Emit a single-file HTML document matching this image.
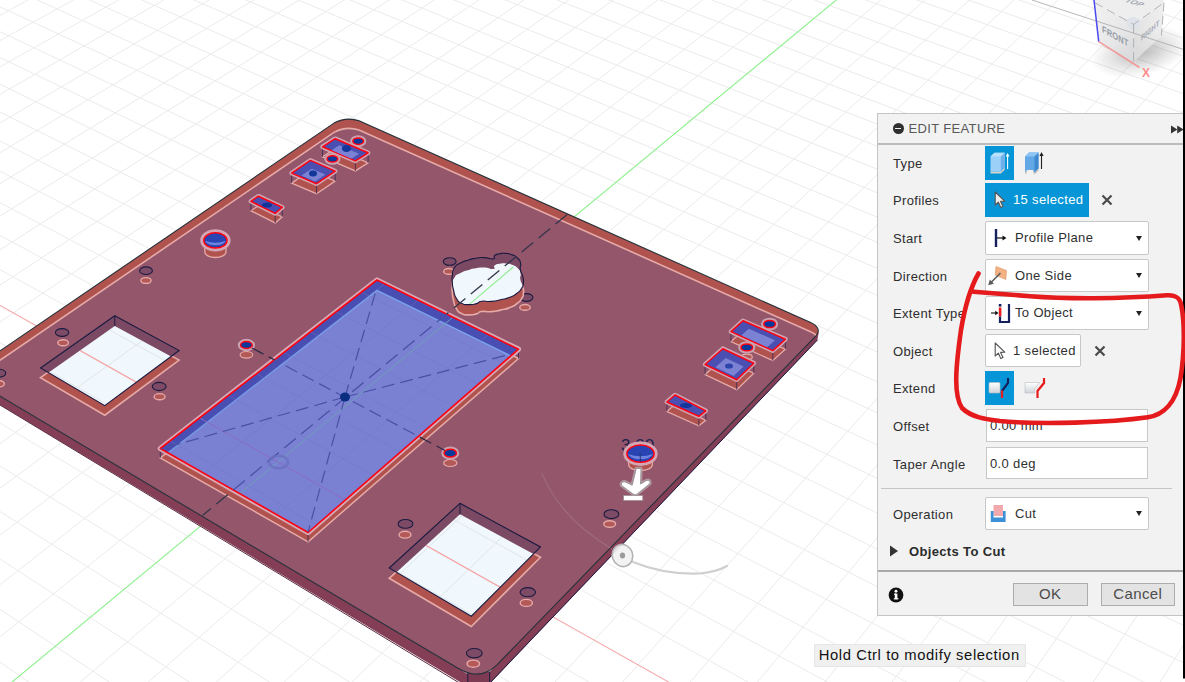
<!DOCTYPE html>
<html><head><meta charset="utf-8"><title>Edit Feature</title>
<style>
html,body{margin:0;padding:0;background:#fff;}
body{width:1185px;height:682px;overflow:hidden;position:relative;font-family:"Liberation Sans",sans-serif;}

#panel{position:absolute;left:877px;top:113px;width:305px;height:500.5px;background:#f2f2f2;border:1px solid #c4c4c4;border-right:none;font-size:13px;color:#303030;letter-spacing:0.35px;}
#panel .hdr{position:absolute;left:0;top:0;width:100%;height:29px;border-bottom:2px solid #bcbcbc;}
#panel .minus{position:absolute;left:14.5px;top:9px;width:11px;height:11px;border-radius:50%;background:#2f2f2f;}
#panel .minus:after{content:"";position:absolute;left:2.5px;top:4.8px;width:6px;height:1.5px;background:#f2f2f2;}
#panel .ttl{position:absolute;left:30.5px;top:7px;font-size:13px;color:#585858;}
#panel .ff{position:absolute;left:292.5px;top:11px;}
#panel .row{position:absolute;left:0;width:100%;height:34px;}
#panel .lbl{position:absolute;left:15px;top:10px;white-space:nowrap;color:#2e2e2e;}
#panel .bbtn{position:absolute;width:29px;height:33.5px;background:#0696d7;}
#panel .ibtn{position:absolute;width:29px;height:33.5px;}
#panel .selbtn{position:absolute;top:0;height:31px;border:1px solid #c8c8c8;background:#fff;border-radius:2px;}
#panel .selbtn.on{background:#0696d7;border-color:#0696d7;color:#fff;border-radius:0;height:32px;}
#panel .selbtn span{position:absolute;left:27px;top:8px;white-space:nowrap;}
#panel .selbtn .cur{position:absolute;left:7px;top:6px;}
#panel .xx{position:absolute;top:11px;}
#panel .dd{position:absolute;top:0;width:162px;height:31.5px;border:1px solid #c8c8c8;background:#fff;border-radius:2px;}
#panel .dd span{position:absolute;left:29px;top:8px;white-space:nowrap;}
#panel .dd .ic{position:absolute;left:1px;top:4px;}
#panel .dd i{position:absolute;right:6.5px;top:13.5px;width:0;height:0;border-left:3.6px solid transparent;border-right:3.6px solid transparent;border-top:5.2px solid #222;}
#panel .inp{position:absolute;top:0;width:160px;height:30.5px;border:1px solid #c8c8c8;background:#fff;}
#panel .inp span{position:absolute;left:3px;top:8px;}
#panel .sep{position:absolute;height:1px;background:#c6c6c6;}
#panel .sep2{position:absolute;left:0;width:100%;height:2px;background:#a9a9a9;}
#panel .info{position:absolute;left:10px;top:472.5px;width:16px;height:16px;}
#panel .btn{position:absolute;top:469px;width:72.5px;height:20.5px;border:1px solid #adadad;background:#e3e3e3;text-align:center;font-size:15px;line-height:20px;color:#4c4c4c;}
#tip{position:absolute;left:813.5px;top:644px;width:212px;height:22.5px;background:#f0f0f0;border:1px solid #e6e6e6;box-sizing:border-box;font-size:14.8px;line-height:21.5px;color:#111;white-space:nowrap;padding-left:4.2px;letter-spacing:0.58px;}
</style></head><body>
<svg width="1185" height="682" viewBox="0 0 1185 682" style="position:absolute;left:0;top:0">
<defs>
<clipPath id="cp"><path d="M -35.5,375.1 L 334,123.1 Q 346,116.6 359,120.7 L 810,322.3 Q 822.5,327.8 816,335.9 L 497,664.8 Q 480,681.5 458,668.3 Z"/></clipPath>
</defs>
<rect width="1185" height="682" fill="#ffffff"/>
<g stroke="#ebebeb" stroke-width="1" fill="none"><line x1="1157.2" y1="687.0" x2="1190.0" y2="634.4"/><line x1="1090.1" y1="687.0" x2="1190.0" y2="535.0"/><line x1="1022.9" y1="687.0" x2="1190.0" y2="445.3"/><line x1="955.6" y1="687.0" x2="1190.0" y2="364.0"/><line x1="888.3" y1="687.0" x2="1190.0" y2="289.9"/><line x1="820.9" y1="687.0" x2="1190.0" y2="222.2"/><line x1="753.4" y1="687.0" x2="1190.0" y2="160.0"/><line x1="685.8" y1="687.0" x2="1190.0" y2="102.6"/><line x1="618.2" y1="687.0" x2="1190.0" y2="49.7"/><line x1="550.5" y1="687.0" x2="1190.0" y2="0.5"/><line x1="482.7" y1="687.0" x2="1151.2" y2="-5.0"/><line x1="414.8" y1="687.0" x2="1107.2" y2="-5.0"/><line x1="346.9" y1="687.0" x2="1063.2" y2="-5.0"/><line x1="278.9" y1="687.0" x2="1019.1" y2="-5.0"/><line x1="210.8" y1="687.0" x2="975.0" y2="-5.0"/><line x1="142.6" y1="687.0" x2="930.8" y2="-5.0"/><line x1="74.4" y1="687.0" x2="886.6" y2="-5.0"/><line x1="-5.0" y1="640.9" x2="798.0" y2="-5.0"/><line x1="-5.0" y1="588.6" x2="753.6" y2="-5.0"/><line x1="-5.0" y1="539.0" x2="709.2" y2="-5.0"/><line x1="-5.0" y1="492.0" x2="664.7" y2="-5.0"/><line x1="-5.0" y1="447.2" x2="620.2" y2="-5.0"/><line x1="-5.0" y1="404.6" x2="575.7" y2="-5.0"/><line x1="-5.0" y1="364.0" x2="531.0" y2="-5.0"/><line x1="-5.0" y1="325.3" x2="486.4" y2="-5.0"/><line x1="-5.0" y1="288.4" x2="441.7" y2="-5.0"/><line x1="-5.0" y1="253.0" x2="396.9" y2="-5.0"/><line x1="-5.0" y1="219.2" x2="352.1" y2="-5.0"/><line x1="-5.0" y1="186.8" x2="307.2" y2="-5.0"/><line x1="-5.0" y1="155.7" x2="262.3" y2="-5.0"/><line x1="-5.0" y1="125.9" x2="217.4" y2="-5.0"/><line x1="-5.0" y1="97.3" x2="172.4" y2="-5.0"/><line x1="-5.0" y1="69.8" x2="127.3" y2="-5.0"/><line x1="-5.0" y1="43.3" x2="82.2" y2="-5.0"/><line x1="-5.0" y1="17.9" x2="37.1" y2="-5.0"/><line x1="36.2" y1="687.0" x2="-5.0" y2="658.8"/><line x1="116.7" y1="687.0" x2="-5.0" y2="605.9"/><line x1="197.1" y1="687.0" x2="-5.0" y2="555.8"/><line x1="277.4" y1="687.0" x2="-5.0" y2="508.3"/><line x1="357.6" y1="687.0" x2="-5.0" y2="463.0"/><line x1="437.7" y1="687.0" x2="-5.0" y2="420.0"/><line x1="517.7" y1="687.0" x2="-5.0" y2="379.0"/><line x1="597.6" y1="687.0" x2="-5.0" y2="339.9"/><line x1="757.1" y1="687.0" x2="-5.0" y2="266.9"/><line x1="836.6" y1="687.0" x2="-5.0" y2="232.7"/><line x1="916.1" y1="687.0" x2="-5.0" y2="200.0"/><line x1="995.5" y1="687.0" x2="-5.0" y2="168.6"/><line x1="1074.8" y1="687.0" x2="-5.0" y2="138.5"/><line x1="1153.9" y1="687.0" x2="-5.0" y2="109.6"/><line x1="1190.0" y1="666.0" x2="-5.0" y2="81.8"/><line x1="1190.0" y1="628.5" x2="-5.0" y2="55.1"/><line x1="1190.0" y1="592.4" x2="-5.0" y2="29.4"/><line x1="1190.0" y1="557.6" x2="-5.0" y2="4.6"/><line x1="1190.0" y1="524.1" x2="26.4" y2="-5.0"/><line x1="1190.0" y1="491.8" x2="78.5" y2="-5.0"/><line x1="1190.0" y1="460.6" x2="130.5" y2="-5.0"/><line x1="1190.0" y1="430.4" x2="182.4" y2="-5.0"/><line x1="1190.0" y1="401.3" x2="234.3" y2="-5.0"/><line x1="1190.0" y1="373.2" x2="286.1" y2="-5.0"/><line x1="1190.0" y1="345.9" x2="337.9" y2="-5.0"/><line x1="1190.0" y1="319.6" x2="389.6" y2="-5.0"/><line x1="1190.0" y1="294.0" x2="441.2" y2="-5.0"/><line x1="1190.0" y1="269.3" x2="492.7" y2="-5.0"/><line x1="1190.0" y1="245.3" x2="544.2" y2="-5.0"/><line x1="1190.0" y1="222.0" x2="595.7" y2="-5.0"/><line x1="1190.0" y1="199.5" x2="647.0" y2="-5.0"/><line x1="1190.0" y1="177.6" x2="698.3" y2="-5.0"/><line x1="1190.0" y1="156.3" x2="749.6" y2="-5.0"/><line x1="1190.0" y1="135.6" x2="800.7" y2="-5.0"/><line x1="1190.0" y1="115.5" x2="851.8" y2="-5.0"/><line x1="1190.0" y1="96.0" x2="902.9" y2="-5.0"/><line x1="1190.0" y1="77.0" x2="953.8" y2="-5.0"/><line x1="1190.0" y1="58.5" x2="1004.8" y2="-5.0"/><line x1="1190.0" y1="40.5" x2="1055.6" y2="-5.0"/><line x1="1190.0" y1="22.9" x2="1106.4" y2="-5.0"/><line x1="1190.0" y1="5.9" x2="1157.1" y2="-5.0"/></g>
<line x1="6.1" y1="687.0" x2="842.3" y2="-5.0" stroke="#8cf08c" stroke-width="1.1"/>
<line x1="677.4" y1="687.0" x2="-5.0" y2="302.6" stroke="#f6a8a8" stroke-width="1.05"/>
<polygon points="-40.0,372.4 468.0,674.2 480.0,681.0 490.0,671.5 816.0,335.9 819.0,331.0 817.4,340.0 480.0,694.0 -40.0,380.8" fill="#843f56"/>
<polygon points="467.8,672.5 489.7,671.6 489.7,700.0 467.8,700.0" fill="#7c3b52"/>
<polyline points="-40.0,380.8 480.0,695.4" fill="none" stroke="#5a2c44" stroke-width="1"/>
<polyline points="817.4,340.0 480.0,693.3" fill="none" stroke="#1b1b42" stroke-width="1"/>
<line x1="467.8" y1="672.5" x2="467.8" y2="690" stroke="#1b1b42"/>
<line x1="489.7" y1="671.6" x2="489.7" y2="690" stroke="#1b1b42"/>
<path d="M -35.5,375.1 L 334,123.1 Q 346,116.6 359,120.7 L 810,322.3 Q 822.5,327.8 816,335.9 L 497,664.8 Q 480,681.5 458,668.3 Z" fill="#b0534f"/>
<g clip-path="url(#cp)"><path d="M -35.5,375.1 L 334,123.1 Q 346,116.6 359,120.7 L 810,322.3 Q 822.5,327.8 816,335.9 L 497,664.8 Q 480,681.5 458,668.3 Z" transform="translate(0,9.3)" fill="#94566a" stroke="#e6aaa8" stroke-width="1.6"/></g>
<path d="M -35.5,375.1 L 334,123.1 Q 346,116.6 359,120.7 L 810,322.3 Q 822.5,327.8 816,335.9 L 497,664.8 Q 480,681.5 458,668.3 Z" fill="none" stroke="#24303a" stroke-width="1.1"/>
<polygon points="114.8,325.3 179.1,360.1 104.8,415.2 40.5,377.6" fill="#b0534f" stroke="#e6aaa8" stroke-width="1.6"/><clipPath id="h1"><polygon points="114.8,315.7 179.1,350.5 104.8,405.6 40.5,368.0"/></clipPath><clipPath id="h1s"><polygon points="114.8,325.9 179.1,360.7 104.8,415.8 40.5,378.2"/></clipPath><polygon points="114.8,315.7 179.1,350.5 104.8,405.6 40.5,368.0" fill="#7b4963"/><g clip-path="url(#h1)"><polygon points="114.8,325.9 179.1,360.7 104.8,415.8 40.5,378.2" fill="#f0f8fd"/><g clip-path="url(#h1s)"><g stroke="#dfe5e8" stroke-width="1" fill="none"><line x1="1157.2" y1="687.0" x2="1190.0" y2="634.4"/><line x1="1090.1" y1="687.0" x2="1190.0" y2="535.0"/><line x1="1022.9" y1="687.0" x2="1190.0" y2="445.3"/><line x1="955.6" y1="687.0" x2="1190.0" y2="364.0"/><line x1="888.3" y1="687.0" x2="1190.0" y2="289.9"/><line x1="820.9" y1="687.0" x2="1190.0" y2="222.2"/><line x1="753.4" y1="687.0" x2="1190.0" y2="160.0"/><line x1="685.8" y1="687.0" x2="1190.0" y2="102.6"/><line x1="618.2" y1="687.0" x2="1190.0" y2="49.7"/><line x1="550.5" y1="687.0" x2="1190.0" y2="0.5"/><line x1="482.7" y1="687.0" x2="1151.2" y2="-5.0"/><line x1="414.8" y1="687.0" x2="1107.2" y2="-5.0"/><line x1="346.9" y1="687.0" x2="1063.2" y2="-5.0"/><line x1="278.9" y1="687.0" x2="1019.1" y2="-5.0"/><line x1="210.8" y1="687.0" x2="975.0" y2="-5.0"/><line x1="142.6" y1="687.0" x2="930.8" y2="-5.0"/><line x1="74.4" y1="687.0" x2="886.6" y2="-5.0"/><line x1="-5.0" y1="640.9" x2="798.0" y2="-5.0"/><line x1="-5.0" y1="588.6" x2="753.6" y2="-5.0"/><line x1="-5.0" y1="539.0" x2="709.2" y2="-5.0"/><line x1="-5.0" y1="492.0" x2="664.7" y2="-5.0"/><line x1="-5.0" y1="447.2" x2="620.2" y2="-5.0"/><line x1="-5.0" y1="404.6" x2="575.7" y2="-5.0"/><line x1="-5.0" y1="364.0" x2="531.0" y2="-5.0"/><line x1="-5.0" y1="325.3" x2="486.4" y2="-5.0"/><line x1="-5.0" y1="288.4" x2="441.7" y2="-5.0"/><line x1="-5.0" y1="253.0" x2="396.9" y2="-5.0"/><line x1="-5.0" y1="219.2" x2="352.1" y2="-5.0"/><line x1="-5.0" y1="186.8" x2="307.2" y2="-5.0"/><line x1="-5.0" y1="155.7" x2="262.3" y2="-5.0"/><line x1="-5.0" y1="125.9" x2="217.4" y2="-5.0"/><line x1="-5.0" y1="97.3" x2="172.4" y2="-5.0"/><line x1="-5.0" y1="69.8" x2="127.3" y2="-5.0"/><line x1="-5.0" y1="43.3" x2="82.2" y2="-5.0"/><line x1="-5.0" y1="17.9" x2="37.1" y2="-5.0"/><line x1="36.2" y1="687.0" x2="-5.0" y2="658.8"/><line x1="116.7" y1="687.0" x2="-5.0" y2="605.9"/><line x1="197.1" y1="687.0" x2="-5.0" y2="555.8"/><line x1="277.4" y1="687.0" x2="-5.0" y2="508.3"/><line x1="357.6" y1="687.0" x2="-5.0" y2="463.0"/><line x1="437.7" y1="687.0" x2="-5.0" y2="420.0"/><line x1="517.7" y1="687.0" x2="-5.0" y2="379.0"/><line x1="597.6" y1="687.0" x2="-5.0" y2="339.9"/><line x1="757.1" y1="687.0" x2="-5.0" y2="266.9"/><line x1="836.6" y1="687.0" x2="-5.0" y2="232.7"/><line x1="916.1" y1="687.0" x2="-5.0" y2="200.0"/><line x1="995.5" y1="687.0" x2="-5.0" y2="168.6"/><line x1="1074.8" y1="687.0" x2="-5.0" y2="138.5"/><line x1="1153.9" y1="687.0" x2="-5.0" y2="109.6"/><line x1="1190.0" y1="666.0" x2="-5.0" y2="81.8"/><line x1="1190.0" y1="628.5" x2="-5.0" y2="55.1"/><line x1="1190.0" y1="592.4" x2="-5.0" y2="29.4"/><line x1="1190.0" y1="557.6" x2="-5.0" y2="4.6"/><line x1="1190.0" y1="524.1" x2="26.4" y2="-5.0"/><line x1="1190.0" y1="491.8" x2="78.5" y2="-5.0"/><line x1="1190.0" y1="460.6" x2="130.5" y2="-5.0"/><line x1="1190.0" y1="430.4" x2="182.4" y2="-5.0"/><line x1="1190.0" y1="401.3" x2="234.3" y2="-5.0"/><line x1="1190.0" y1="373.2" x2="286.1" y2="-5.0"/><line x1="1190.0" y1="345.9" x2="337.9" y2="-5.0"/><line x1="1190.0" y1="319.6" x2="389.6" y2="-5.0"/><line x1="1190.0" y1="294.0" x2="441.2" y2="-5.0"/><line x1="1190.0" y1="269.3" x2="492.7" y2="-5.0"/><line x1="1190.0" y1="245.3" x2="544.2" y2="-5.0"/><line x1="1190.0" y1="222.0" x2="595.7" y2="-5.0"/><line x1="1190.0" y1="199.5" x2="647.0" y2="-5.0"/><line x1="1190.0" y1="177.6" x2="698.3" y2="-5.0"/><line x1="1190.0" y1="156.3" x2="749.6" y2="-5.0"/><line x1="1190.0" y1="135.6" x2="800.7" y2="-5.0"/><line x1="1190.0" y1="115.5" x2="851.8" y2="-5.0"/><line x1="1190.0" y1="96.0" x2="902.9" y2="-5.0"/><line x1="1190.0" y1="77.0" x2="953.8" y2="-5.0"/><line x1="1190.0" y1="58.5" x2="1004.8" y2="-5.0"/><line x1="1190.0" y1="40.5" x2="1055.6" y2="-5.0"/><line x1="1190.0" y1="22.9" x2="1106.4" y2="-5.0"/><line x1="1190.0" y1="5.9" x2="1157.1" y2="-5.0"/></g><line x1="677.4" y1="687.0" x2="-5.0" y2="302.6" stroke="#f5a3a3" stroke-width="1.2"/></g></g>
<polygon points="114.8,315.7 179.1,350.5 104.8,405.6 40.5,368.0" fill="none" stroke="#1b1b42" stroke-width="1.1"/>
<line x1="114.8" y1="315.7" x2="114.8" y2="325.9" stroke="#1b1b42"/>
<polygon points="460.0,513.6 540.5,557.2 471.3,626.5 389.2,578.3" fill="#b0534f" stroke="#e6aaa8" stroke-width="1.6"/><clipPath id="h2"><polygon points="460.0,503.3 540.5,546.9 471.3,616.2 389.2,568.0"/></clipPath><clipPath id="h2s"><polygon points="460.0,514.2 540.5,557.8 471.3,627.1 389.2,578.9"/></clipPath><polygon points="460.0,503.3 540.5,546.9 471.3,616.2 389.2,568.0" fill="#7b4963"/><g clip-path="url(#h2)"><polygon points="460.0,514.2 540.5,557.8 471.3,627.1 389.2,578.9" fill="#f0f8fd"/><g clip-path="url(#h2s)"><g stroke="#dfe5e8" stroke-width="1" fill="none"><line x1="1157.2" y1="687.0" x2="1190.0" y2="634.4"/><line x1="1090.1" y1="687.0" x2="1190.0" y2="535.0"/><line x1="1022.9" y1="687.0" x2="1190.0" y2="445.3"/><line x1="955.6" y1="687.0" x2="1190.0" y2="364.0"/><line x1="888.3" y1="687.0" x2="1190.0" y2="289.9"/><line x1="820.9" y1="687.0" x2="1190.0" y2="222.2"/><line x1="753.4" y1="687.0" x2="1190.0" y2="160.0"/><line x1="685.8" y1="687.0" x2="1190.0" y2="102.6"/><line x1="618.2" y1="687.0" x2="1190.0" y2="49.7"/><line x1="550.5" y1="687.0" x2="1190.0" y2="0.5"/><line x1="482.7" y1="687.0" x2="1151.2" y2="-5.0"/><line x1="414.8" y1="687.0" x2="1107.2" y2="-5.0"/><line x1="346.9" y1="687.0" x2="1063.2" y2="-5.0"/><line x1="278.9" y1="687.0" x2="1019.1" y2="-5.0"/><line x1="210.8" y1="687.0" x2="975.0" y2="-5.0"/><line x1="142.6" y1="687.0" x2="930.8" y2="-5.0"/><line x1="74.4" y1="687.0" x2="886.6" y2="-5.0"/><line x1="-5.0" y1="640.9" x2="798.0" y2="-5.0"/><line x1="-5.0" y1="588.6" x2="753.6" y2="-5.0"/><line x1="-5.0" y1="539.0" x2="709.2" y2="-5.0"/><line x1="-5.0" y1="492.0" x2="664.7" y2="-5.0"/><line x1="-5.0" y1="447.2" x2="620.2" y2="-5.0"/><line x1="-5.0" y1="404.6" x2="575.7" y2="-5.0"/><line x1="-5.0" y1="364.0" x2="531.0" y2="-5.0"/><line x1="-5.0" y1="325.3" x2="486.4" y2="-5.0"/><line x1="-5.0" y1="288.4" x2="441.7" y2="-5.0"/><line x1="-5.0" y1="253.0" x2="396.9" y2="-5.0"/><line x1="-5.0" y1="219.2" x2="352.1" y2="-5.0"/><line x1="-5.0" y1="186.8" x2="307.2" y2="-5.0"/><line x1="-5.0" y1="155.7" x2="262.3" y2="-5.0"/><line x1="-5.0" y1="125.9" x2="217.4" y2="-5.0"/><line x1="-5.0" y1="97.3" x2="172.4" y2="-5.0"/><line x1="-5.0" y1="69.8" x2="127.3" y2="-5.0"/><line x1="-5.0" y1="43.3" x2="82.2" y2="-5.0"/><line x1="-5.0" y1="17.9" x2="37.1" y2="-5.0"/><line x1="36.2" y1="687.0" x2="-5.0" y2="658.8"/><line x1="116.7" y1="687.0" x2="-5.0" y2="605.9"/><line x1="197.1" y1="687.0" x2="-5.0" y2="555.8"/><line x1="277.4" y1="687.0" x2="-5.0" y2="508.3"/><line x1="357.6" y1="687.0" x2="-5.0" y2="463.0"/><line x1="437.7" y1="687.0" x2="-5.0" y2="420.0"/><line x1="517.7" y1="687.0" x2="-5.0" y2="379.0"/><line x1="597.6" y1="687.0" x2="-5.0" y2="339.9"/><line x1="757.1" y1="687.0" x2="-5.0" y2="266.9"/><line x1="836.6" y1="687.0" x2="-5.0" y2="232.7"/><line x1="916.1" y1="687.0" x2="-5.0" y2="200.0"/><line x1="995.5" y1="687.0" x2="-5.0" y2="168.6"/><line x1="1074.8" y1="687.0" x2="-5.0" y2="138.5"/><line x1="1153.9" y1="687.0" x2="-5.0" y2="109.6"/><line x1="1190.0" y1="666.0" x2="-5.0" y2="81.8"/><line x1="1190.0" y1="628.5" x2="-5.0" y2="55.1"/><line x1="1190.0" y1="592.4" x2="-5.0" y2="29.4"/><line x1="1190.0" y1="557.6" x2="-5.0" y2="4.6"/><line x1="1190.0" y1="524.1" x2="26.4" y2="-5.0"/><line x1="1190.0" y1="491.8" x2="78.5" y2="-5.0"/><line x1="1190.0" y1="460.6" x2="130.5" y2="-5.0"/><line x1="1190.0" y1="430.4" x2="182.4" y2="-5.0"/><line x1="1190.0" y1="401.3" x2="234.3" y2="-5.0"/><line x1="1190.0" y1="373.2" x2="286.1" y2="-5.0"/><line x1="1190.0" y1="345.9" x2="337.9" y2="-5.0"/><line x1="1190.0" y1="319.6" x2="389.6" y2="-5.0"/><line x1="1190.0" y1="294.0" x2="441.2" y2="-5.0"/><line x1="1190.0" y1="269.3" x2="492.7" y2="-5.0"/><line x1="1190.0" y1="245.3" x2="544.2" y2="-5.0"/><line x1="1190.0" y1="222.0" x2="595.7" y2="-5.0"/><line x1="1190.0" y1="199.5" x2="647.0" y2="-5.0"/><line x1="1190.0" y1="177.6" x2="698.3" y2="-5.0"/><line x1="1190.0" y1="156.3" x2="749.6" y2="-5.0"/><line x1="1190.0" y1="135.6" x2="800.7" y2="-5.0"/><line x1="1190.0" y1="115.5" x2="851.8" y2="-5.0"/><line x1="1190.0" y1="96.0" x2="902.9" y2="-5.0"/><line x1="1190.0" y1="77.0" x2="953.8" y2="-5.0"/><line x1="1190.0" y1="58.5" x2="1004.8" y2="-5.0"/><line x1="1190.0" y1="40.5" x2="1055.6" y2="-5.0"/><line x1="1190.0" y1="22.9" x2="1106.4" y2="-5.0"/><line x1="1190.0" y1="5.9" x2="1157.1" y2="-5.0"/></g><line x1="677.4" y1="687.0" x2="-5.0" y2="302.6" stroke="#f5a3a3" stroke-width="1.2"/></g></g>
<polygon points="460.0,503.3 540.5,546.9 471.3,616.2 389.2,568.0" fill="none" stroke="#1b1b42" stroke-width="1.1"/>
<line x1="460" y1="503.3" x2="460" y2="514.2" stroke="#1b1b42"/>
<ellipse cx="146.0" cy="280.5" rx="5.1" ry="2.9" fill="#b35957" stroke="#e6aaa8" stroke-width="1.4"/><ellipse cx="146.0" cy="270.7" rx="6.4" ry="3.8" fill="#7d4b66" stroke="#1b1b42" stroke-width="1.1"/>
<ellipse cx="63.1" cy="342.8" rx="5.3" ry="3.0" fill="#b35957" stroke="#e6aaa8" stroke-width="1.4"/><ellipse cx="62.1" cy="332.5" rx="6.7" ry="3.9" fill="#7d4b66" stroke="#1b1b42" stroke-width="1.1"/>
<ellipse cx="159.6" cy="396.7" rx="5.5" ry="3.1" fill="#b35957" stroke="#e6aaa8" stroke-width="1.4"/><ellipse cx="159.2" cy="386.5" rx="6.9" ry="4.1" fill="#7d4b66" stroke="#1b1b42" stroke-width="1.1"/>
<ellipse cx="-1.0" cy="383.8" rx="5.4" ry="3.1" fill="#b35957" stroke="#e6aaa8" stroke-width="1.4"/><ellipse cx="-1.0" cy="373.2" rx="6.8" ry="4.0" fill="#7d4b66" stroke="#1b1b42" stroke-width="1.1"/>
<ellipse cx="405.0" cy="534.7" rx="5.9" ry="3.4" fill="#b35957" stroke="#e6aaa8" stroke-width="1.4"/><ellipse cx="405.5" cy="523.9" rx="7.4" ry="4.4" fill="#7d4b66" stroke="#1b1b42" stroke-width="1.1"/>
<ellipse cx="526.3" cy="602.9" rx="6.1" ry="3.5" fill="#b35957" stroke="#e6aaa8" stroke-width="1.4"/><ellipse cx="527.8" cy="592.2" rx="7.7" ry="4.6" fill="#7d4b66" stroke="#1b1b42" stroke-width="1.1"/>
<ellipse cx="609.7" cy="524.0" rx="5.9" ry="3.3" fill="#b35957" stroke="#e6aaa8" stroke-width="1.4"/><ellipse cx="611.4" cy="514.2" rx="7.4" ry="4.4" fill="#7d4b66" stroke="#1b1b42" stroke-width="1.1"/>
<ellipse cx="473.3" cy="663.7" rx="6.3" ry="3.6" fill="#b35957" stroke="#e6aaa8" stroke-width="1.4"/><ellipse cx="474.3" cy="653.2" rx="7.9" ry="4.7" fill="#7d4b66" stroke="#1b1b42" stroke-width="1.1"/>
<ellipse cx="448.8" cy="271.4" rx="5.1" ry="2.9" fill="#b35957" stroke="#e6aaa8" stroke-width="1.4"/><ellipse cx="449.7" cy="261.5" rx="6.4" ry="3.8" fill="#7d4b66" stroke="#1b1b42" stroke-width="1.1"/>
<ellipse cx="525.0" cy="307.4" rx="5.2" ry="2.9" fill="#b35957" stroke="#e6aaa8" stroke-width="1.4"/><ellipse cx="526.4" cy="297.5" rx="6.5" ry="3.9" fill="#7d4b66" stroke="#1b1b42" stroke-width="1.1"/>
<path d="M452.3,276.0 C452.9,271.3 451.6,272.2 454.2,268.0 C456.8,263.8 455.2,266.0 460.0,263.3 C464.8,260.6 463.4,261.6 468.7,259.9 C474.0,258.2 470.9,259.0 476.0,258.2 C481.1,257.4 478.3,257.4 484.0,257.6 C489.7,257.8 489.7,259.6 493.2,258.9 C496.7,258.2 492.5,257.3 494.6,255.6 C496.7,253.9 495.9,254.5 499.5,253.8 C503.1,253.1 501.3,253.1 505.5,253.4 C509.7,253.7 507.9,253.1 512.1,254.8 C516.3,256.5 515.2,255.6 518.0,258.5 C520.8,261.4 519.8,259.9 520.6,263.5 C521.4,267.1 519.6,265.0 520.3,269.3 C521.0,273.6 521.8,271.9 522.8,276.5 C523.8,281.1 523.8,279.1 523.4,283.0 C523.0,286.9 523.7,284.9 521.6,288.3 C519.5,291.7 520.9,290.2 517.0,293.2 C513.1,296.2 515.3,295.1 509.8,297.3 C504.3,299.5 506.7,298.4 500.4,299.8 C494.1,301.2 497.3,300.9 491.0,301.4 C484.7,301.9 486.4,300.5 481.6,301.2 C476.8,301.9 480.8,302.5 476.5,303.6 C472.2,304.7 473.7,304.7 468.7,304.6 C463.7,304.5 465.6,305.2 461.5,303.2 C457.4,301.2 459.2,302.9 456.5,298.5 C453.8,294.1 454.9,295.5 453.5,290.0 C452.1,284.5 452.7,286.7 452.3,282.0 C451.9,277.3 451.7,280.7 452.3,276.0 Z" transform="translate(0,10.3)" fill="#b0534f" stroke="#e6aaa8" stroke-width="1.6"/>
<clipPath id="hb"><path d="M452.3,276.0 C452.9,271.3 451.6,272.2 454.2,268.0 C456.8,263.8 455.2,266.0 460.0,263.3 C464.8,260.6 463.4,261.6 468.7,259.9 C474.0,258.2 470.9,259.0 476.0,258.2 C481.1,257.4 478.3,257.4 484.0,257.6 C489.7,257.8 489.7,259.6 493.2,258.9 C496.7,258.2 492.5,257.3 494.6,255.6 C496.7,253.9 495.9,254.5 499.5,253.8 C503.1,253.1 501.3,253.1 505.5,253.4 C509.7,253.7 507.9,253.1 512.1,254.8 C516.3,256.5 515.2,255.6 518.0,258.5 C520.8,261.4 519.8,259.9 520.6,263.5 C521.4,267.1 519.6,265.0 520.3,269.3 C521.0,273.6 521.8,271.9 522.8,276.5 C523.8,281.1 523.8,279.1 523.4,283.0 C523.0,286.9 523.7,284.9 521.6,288.3 C519.5,291.7 520.9,290.2 517.0,293.2 C513.1,296.2 515.3,295.1 509.8,297.3 C504.3,299.5 506.7,298.4 500.4,299.8 C494.1,301.2 497.3,300.9 491.0,301.4 C484.7,301.9 486.4,300.5 481.6,301.2 C476.8,301.9 480.8,302.5 476.5,303.6 C472.2,304.7 473.7,304.7 468.7,304.6 C463.7,304.5 465.6,305.2 461.5,303.2 C457.4,301.2 459.2,302.9 456.5,298.5 C453.8,294.1 454.9,295.5 453.5,290.0 C452.1,284.5 452.7,286.7 452.3,282.0 C451.9,277.3 451.7,280.7 452.3,276.0 Z"/></clipPath>
<path d="M452.3,276.0 C452.9,271.3 451.6,272.2 454.2,268.0 C456.8,263.8 455.2,266.0 460.0,263.3 C464.8,260.6 463.4,261.6 468.7,259.9 C474.0,258.2 470.9,259.0 476.0,258.2 C481.1,257.4 478.3,257.4 484.0,257.6 C489.7,257.8 489.7,259.6 493.2,258.9 C496.7,258.2 492.5,257.3 494.6,255.6 C496.7,253.9 495.9,254.5 499.5,253.8 C503.1,253.1 501.3,253.1 505.5,253.4 C509.7,253.7 507.9,253.1 512.1,254.8 C516.3,256.5 515.2,255.6 518.0,258.5 C520.8,261.4 519.8,259.9 520.6,263.5 C521.4,267.1 519.6,265.0 520.3,269.3 C521.0,273.6 521.8,271.9 522.8,276.5 C523.8,281.1 523.8,279.1 523.4,283.0 C523.0,286.9 523.7,284.9 521.6,288.3 C519.5,291.7 520.9,290.2 517.0,293.2 C513.1,296.2 515.3,295.1 509.8,297.3 C504.3,299.5 506.7,298.4 500.4,299.8 C494.1,301.2 497.3,300.9 491.0,301.4 C484.7,301.9 486.4,300.5 481.6,301.2 C476.8,301.9 480.8,302.5 476.5,303.6 C472.2,304.7 473.7,304.7 468.7,304.6 C463.7,304.5 465.6,305.2 461.5,303.2 C457.4,301.2 459.2,302.9 456.5,298.5 C453.8,294.1 454.9,295.5 453.5,290.0 C452.1,284.5 452.7,286.7 452.3,282.0 C451.9,277.3 451.7,280.7 452.3,276.0 Z" fill="#7b4963"/>
<g clip-path="url(#hb)"><path d="M452.3,276.0 C452.9,271.3 451.6,272.2 454.2,268.0 C456.8,263.8 455.2,266.0 460.0,263.3 C464.8,260.6 463.4,261.6 468.7,259.9 C474.0,258.2 470.9,259.0 476.0,258.2 C481.1,257.4 478.3,257.4 484.0,257.6 C489.7,257.8 489.7,259.6 493.2,258.9 C496.7,258.2 492.5,257.3 494.6,255.6 C496.7,253.9 495.9,254.5 499.5,253.8 C503.1,253.1 501.3,253.1 505.5,253.4 C509.7,253.7 507.9,253.1 512.1,254.8 C516.3,256.5 515.2,255.6 518.0,258.5 C520.8,261.4 519.8,259.9 520.6,263.5 C521.4,267.1 519.6,265.0 520.3,269.3 C521.0,273.6 521.8,271.9 522.8,276.5 C523.8,281.1 523.8,279.1 523.4,283.0 C523.0,286.9 523.7,284.9 521.6,288.3 C519.5,291.7 520.9,290.2 517.0,293.2 C513.1,296.2 515.3,295.1 509.8,297.3 C504.3,299.5 506.7,298.4 500.4,299.8 C494.1,301.2 497.3,300.9 491.0,301.4 C484.7,301.9 486.4,300.5 481.6,301.2 C476.8,301.9 480.8,302.5 476.5,303.6 C472.2,304.7 473.7,304.7 468.7,304.6 C463.7,304.5 465.6,305.2 461.5,303.2 C457.4,301.2 459.2,302.9 456.5,298.5 C453.8,294.1 454.9,295.5 453.5,290.0 C452.1,284.5 452.7,286.7 452.3,282.0 C451.9,277.3 451.7,280.7 452.3,276.0 Z" transform="translate(0,10)" fill="#f0f8fd"/>
<line x1="513.3" y1="267" x2="469.3" y2="304.3" stroke="#8aee8a" stroke-width="1.1"/></g>
<path d="M452.3,276.0 C452.9,271.3 451.6,272.2 454.2,268.0 C456.8,263.8 455.2,266.0 460.0,263.3 C464.8,260.6 463.4,261.6 468.7,259.9 C474.0,258.2 470.9,259.0 476.0,258.2 C481.1,257.4 478.3,257.4 484.0,257.6 C489.7,257.8 489.7,259.6 493.2,258.9 C496.7,258.2 492.5,257.3 494.6,255.6 C496.7,253.9 495.9,254.5 499.5,253.8 C503.1,253.1 501.3,253.1 505.5,253.4 C509.7,253.7 507.9,253.1 512.1,254.8 C516.3,256.5 515.2,255.6 518.0,258.5 C520.8,261.4 519.8,259.9 520.6,263.5 C521.4,267.1 519.6,265.0 520.3,269.3 C521.0,273.6 521.8,271.9 522.8,276.5 C523.8,281.1 523.8,279.1 523.4,283.0 C523.0,286.9 523.7,284.9 521.6,288.3 C519.5,291.7 520.9,290.2 517.0,293.2 C513.1,296.2 515.3,295.1 509.8,297.3 C504.3,299.5 506.7,298.4 500.4,299.8 C494.1,301.2 497.3,300.9 491.0,301.4 C484.7,301.9 486.4,300.5 481.6,301.2 C476.8,301.9 480.8,302.5 476.5,303.6 C472.2,304.7 473.7,304.7 468.7,304.6 C463.7,304.5 465.6,305.2 461.5,303.2 C457.4,301.2 459.2,302.9 456.5,298.5 C453.8,294.1 454.9,295.5 453.5,290.0 C452.1,284.5 452.7,286.7 452.3,282.0 C451.9,277.3 451.7,280.7 452.3,276.0 Z" fill="none" stroke="#1b1b42" stroke-width="1.1"/>
<ellipse cx="358.2" cy="141.2" rx="0.0" ry="0.0" fill="#b35957" stroke="#e6aaa8" stroke-width="1.2"/><ellipse cx="358.2" cy="141.2" rx="6.5" ry="4.3" fill="none" stroke="#c9a2b0" stroke-width="3.2"/><ellipse cx="358.2" cy="141.2" rx="5.3" ry="3.2" fill="#0b399b" stroke="#ff0010" stroke-width="1.5"/>
<polygon points="322.5,156.8 335.2,148.7 368.1,162.8 355.4,170.9" fill="#b0534f" stroke="#e6aaa8" stroke-width="1.3"/><line x1="322.5" y1="146.8" x2="322.5" y2="156.8" stroke="#3a2a50" stroke-width="0.8"/><line x1="335.2" y1="138.7" x2="335.2" y2="148.7" stroke="#3a2a50" stroke-width="0.8"/><line x1="368.1" y1="152.8" x2="368.1" y2="162.8" stroke="#3a2a50" stroke-width="0.8"/><line x1="355.4" y1="160.9" x2="355.4" y2="170.9" stroke="#3a2a50" stroke-width="0.8"/><polygon points="322.5,146.8 335.2,138.7 368.1,152.8 355.4,160.9" fill="none" stroke="#cfa4b2" stroke-width="4.6" stroke-linejoin="round"/><polygon points="322.5,146.8 335.2,138.7 368.1,152.8 355.4,160.9" fill="#4a4fb2" stroke="#ff0010" stroke-width="1.5" stroke-linejoin="round"/><polygon points="331.6,150.2 339.2,145.3 359.0,153.8 351.4,158.7" fill="#7b82d3"/>
<ellipse cx="346.5" cy="148.5" rx="4.6" ry="3.6" fill="#12369a"/>
<ellipse cx="332.4" cy="158.9" rx="0.0" ry="0.0" fill="#b35957" stroke="#e6aaa8" stroke-width="1.2"/><ellipse cx="332.4" cy="158.9" rx="6.5" ry="4.3" fill="none" stroke="#c9a2b0" stroke-width="3.2"/><ellipse cx="332.4" cy="158.9" rx="5.3" ry="3.2" fill="#0b399b" stroke="#ff0010" stroke-width="1.5"/>
<polygon points="291.6,183.1 310.4,170.4 335.2,181.1 316.5,193.7" fill="#b0534f" stroke="#e6aaa8" stroke-width="1.3"/><line x1="291.6" y1="173.1" x2="291.6" y2="183.1" stroke="#3a2a50" stroke-width="0.8"/><line x1="310.4" y1="160.4" x2="310.4" y2="170.4" stroke="#3a2a50" stroke-width="0.8"/><line x1="335.2" y1="171.1" x2="335.2" y2="181.1" stroke="#3a2a50" stroke-width="0.8"/><line x1="316.5" y1="183.7" x2="316.5" y2="193.7" stroke="#3a2a50" stroke-width="0.8"/><polygon points="291.6,173.1 310.4,160.4 335.2,171.1 316.5,183.7" fill="none" stroke="#cfa4b2" stroke-width="4.6" stroke-linejoin="round"/><polygon points="291.6,173.1 310.4,160.4 335.2,171.1 316.5,183.7" fill="#4a4fb2" stroke="#ff0010" stroke-width="1.5" stroke-linejoin="round"/><polygon points="301.4,175.6 311.8,168.7 325.4,174.5 315.1,181.5" fill="#7b82d3"/>
<ellipse cx="313" cy="173.5" rx="4" ry="3" fill="#12369a"/>
<polygon points="250.9,210.8 258.4,205.7 282.3,216.8 275.2,222.9" fill="#b0534f" stroke="#e6aaa8" stroke-width="1.3"/><line x1="250.9" y1="201.3" x2="250.9" y2="210.8" stroke="#3a2a50" stroke-width="0.8"/><line x1="258.4" y1="196.2" x2="258.4" y2="205.7" stroke="#3a2a50" stroke-width="0.8"/><line x1="282.3" y1="207.3" x2="282.3" y2="216.8" stroke="#3a2a50" stroke-width="0.8"/><line x1="275.2" y1="213.4" x2="275.2" y2="222.9" stroke="#3a2a50" stroke-width="0.8"/><polygon points="250.9,201.3 258.4,196.2 282.3,207.3 275.2,213.4" fill="none" stroke="#cfa4b2" stroke-width="4.6" stroke-linejoin="round"/><polygon points="250.9,201.3 258.4,196.2 282.3,207.3 275.2,213.4" fill="#4a4fb2" stroke="#ff0010" stroke-width="1.5" stroke-linejoin="round"/>
<ellipse cx="267" cy="205" rx="5" ry="2.6" fill="#12369a"/>
<path d="M204.8,240.4 L204.8,251.9 A10.6,5.6 0 0 0 226.0,251.9 L226.0,240.4 Z" fill="#b0534f" stroke="#e6aaa8" stroke-width="1.3"/><ellipse cx="215.4" cy="240.4" rx="12.9" ry="8.9" fill="none" stroke="#d4a6b4" stroke-width="4.6"/><ellipse cx="215.4" cy="240.4" rx="11.6" ry="7.6" fill="#2a44b4" stroke="#ff0010" stroke-width="1.5"/><path d="M204.8,240.7 A11.6,7.6 0 0 0 226.0,240.7 A18.6,9.9 0 0 1 204.8,240.7 Z" fill="#6c83e0"/>
<ellipse cx="769.6" cy="324.0" rx="0.0" ry="0.0" fill="#b35957" stroke="#e6aaa8" stroke-width="1.2"/><ellipse cx="769.6" cy="324.0" rx="7.0" ry="4.7" fill="none" stroke="#c9a2b0" stroke-width="3.2"/><ellipse cx="769.6" cy="324.0" rx="5.8" ry="3.6" fill="#0b399b" stroke="#ff0010" stroke-width="1.5"/>
<polygon points="731.0,341.6 743.0,330.8 785.4,349.2 772.8,360.6" fill="#b0534f" stroke="#e6aaa8" stroke-width="1.3"/><line x1="731.0" y1="331.6" x2="731.0" y2="341.6" stroke="#3a2a50" stroke-width="0.8"/><line x1="743.0" y1="320.8" x2="743.0" y2="330.8" stroke="#3a2a50" stroke-width="0.8"/><line x1="785.4" y1="339.2" x2="785.4" y2="349.2" stroke="#3a2a50" stroke-width="0.8"/><line x1="772.8" y1="350.6" x2="772.8" y2="360.6" stroke="#3a2a50" stroke-width="0.8"/><polygon points="731.0,331.6 743.0,320.8 785.4,339.2 772.8,350.6" fill="none" stroke="#cfa4b2" stroke-width="4.6" stroke-linejoin="round"/><polygon points="731.0,331.6 743.0,320.8 785.4,339.2 772.8,350.6" fill="#4a4fb2" stroke="#ff0010" stroke-width="1.5" stroke-linejoin="round"/><polygon points="741.3,335.5 748.7,328.8 775.0,340.2 767.2,347.3" fill="#7b82d3"/>
<ellipse cx="746.8" cy="356.9" rx="5.5" ry="2.8" fill="#b35957" stroke="#e6aaa8" stroke-width="1.2"/><ellipse cx="746.8" cy="347.4" rx="7.0" ry="4.5" fill="none" stroke="#c9a2b0" stroke-width="3.2"/><ellipse cx="746.8" cy="347.4" rx="5.8" ry="3.4" fill="#0b399b" stroke="#ff0010" stroke-width="1.5"/>
<polygon points="705.1,374.5 722.8,358.7 753.8,373.2 736.7,389.7" fill="#b0534f" stroke="#e6aaa8" stroke-width="1.3"/><line x1="705.1" y1="364.5" x2="705.1" y2="374.5" stroke="#3a2a50" stroke-width="0.8"/><line x1="722.8" y1="348.7" x2="722.8" y2="358.7" stroke="#3a2a50" stroke-width="0.8"/><line x1="753.8" y1="363.2" x2="753.8" y2="373.2" stroke="#3a2a50" stroke-width="0.8"/><line x1="736.7" y1="379.7" x2="736.7" y2="389.7" stroke="#3a2a50" stroke-width="0.8"/><polygon points="705.1,364.5 722.8,348.7 753.8,363.2 736.7,379.7" fill="none" stroke="#cfa4b2" stroke-width="4.6" stroke-linejoin="round"/><polygon points="705.1,364.5 722.8,348.7 753.8,363.2 736.7,379.7" fill="#4a4fb2" stroke="#ff0010" stroke-width="1.5" stroke-linejoin="round"/><polygon points="715.4,367.3 725.7,358.1 743.6,366.5 733.7,376.1" fill="#7b82d3"/>
<ellipse cx="729" cy="366" rx="4" ry="2.6" fill="#2d44a8"/>
<polygon points="666.9,411.5 675.0,404.5 705.8,420.3 698.8,425.8" fill="#b0534f" stroke="#e6aaa8" stroke-width="1.3"/><line x1="666.9" y1="402.0" x2="666.9" y2="411.5" stroke="#3a2a50" stroke-width="0.8"/><line x1="675.0" y1="395.0" x2="675.0" y2="404.5" stroke="#3a2a50" stroke-width="0.8"/><line x1="705.8" y1="410.8" x2="705.8" y2="420.3" stroke="#3a2a50" stroke-width="0.8"/><line x1="698.8" y1="416.3" x2="698.8" y2="425.8" stroke="#3a2a50" stroke-width="0.8"/><polygon points="666.9,402.0 675.0,395.0 705.8,410.8 698.8,416.3" fill="none" stroke="#cfa4b2" stroke-width="4.6" stroke-linejoin="round"/><polygon points="666.9,402.0 675.0,395.0 705.8,410.8 698.8,416.3" fill="#4a4fb2" stroke="#ff0010" stroke-width="1.5" stroke-linejoin="round"/>
<ellipse cx="686" cy="405.5" rx="6" ry="2.6" fill="#12369a"/>
<ellipse cx="246.4" cy="354.8" rx="6.3" ry="3.3" fill="#b35957" stroke="#e6aaa8" stroke-width="1.2"/><ellipse cx="246.4" cy="345.0" rx="7.0" ry="4.6" fill="none" stroke="#c9a2b0" stroke-width="3.2"/><ellipse cx="246.4" cy="345.0" rx="5.8" ry="3.5" fill="#0b399b" stroke="#ff0010" stroke-width="1.5"/>
<ellipse cx="450.3" cy="463.0" rx="6.6" ry="3.5" fill="#b35957" stroke="#e6aaa8" stroke-width="1.2"/><ellipse cx="450.3" cy="453.2" rx="7.4" ry="5.0" fill="none" stroke="#c9a2b0" stroke-width="3.2"/><ellipse cx="450.3" cy="453.2" rx="6.2" ry="3.9" fill="#0b399b" stroke="#ff0010" stroke-width="1.5"/>
<polygon points="377.0,289.3 518.5,358.5 308.1,541.8 160.3,457.8" fill="#b0534f" stroke="#e6aaa8" stroke-width="1.5"/>
<line x1="518.5" y1="349.2" x2="518.5" y2="358.5" stroke="#3a2a50" stroke-width="0.8"/>
<line x1="308.1" y1="532.5" x2="308.1" y2="541.8" stroke="#3a2a50" stroke-width="0.8"/>
<line x1="160.3" y1="448.5" x2="160.3" y2="457.8" stroke="#3a2a50" stroke-width="0.8"/>
<polygon points="377.0,280.0 518.5,349.2 308.1,532.5 160.3,448.5" fill="none" stroke="#d7a9b6" stroke-width="5.2" stroke-linejoin="round"/>
<clipPath id="pk"><polygon points="377.0,280.0 518.5,349.2 308.1,532.5 160.3,448.5"/></clipPath>
<polygon points="377.0,280.0 518.5,349.2 308.1,532.5 160.3,448.5" fill="#4a4fb2"/>
<g clip-path="url(#pk)">
<polygon points="377.0,290.4 518.5,359.6 308.1,542.9 160.3,458.9" fill="#7b82d3" stroke="#7aa4ee" stroke-width="1.4"/>
<g stroke="#7076c4" stroke-width="0.8" opacity="0.55"><line x1="1157.2" y1="687.0" x2="1190.0" y2="634.4"/><line x1="1090.1" y1="687.0" x2="1190.0" y2="535.0"/><line x1="1022.9" y1="687.0" x2="1190.0" y2="445.3"/><line x1="955.6" y1="687.0" x2="1190.0" y2="364.0"/><line x1="888.3" y1="687.0" x2="1190.0" y2="289.9"/><line x1="820.9" y1="687.0" x2="1190.0" y2="222.2"/><line x1="753.4" y1="687.0" x2="1190.0" y2="160.0"/><line x1="685.8" y1="687.0" x2="1190.0" y2="102.6"/><line x1="618.2" y1="687.0" x2="1190.0" y2="49.7"/><line x1="550.5" y1="687.0" x2="1190.0" y2="0.5"/><line x1="482.7" y1="687.0" x2="1151.2" y2="-5.0"/><line x1="414.8" y1="687.0" x2="1107.2" y2="-5.0"/><line x1="346.9" y1="687.0" x2="1063.2" y2="-5.0"/><line x1="278.9" y1="687.0" x2="1019.1" y2="-5.0"/><line x1="210.8" y1="687.0" x2="975.0" y2="-5.0"/><line x1="142.6" y1="687.0" x2="930.8" y2="-5.0"/><line x1="74.4" y1="687.0" x2="886.6" y2="-5.0"/><line x1="-5.0" y1="640.9" x2="798.0" y2="-5.0"/><line x1="-5.0" y1="588.6" x2="753.6" y2="-5.0"/><line x1="-5.0" y1="539.0" x2="709.2" y2="-5.0"/><line x1="-5.0" y1="492.0" x2="664.7" y2="-5.0"/><line x1="-5.0" y1="447.2" x2="620.2" y2="-5.0"/><line x1="-5.0" y1="404.6" x2="575.7" y2="-5.0"/><line x1="-5.0" y1="364.0" x2="531.0" y2="-5.0"/><line x1="-5.0" y1="325.3" x2="486.4" y2="-5.0"/><line x1="-5.0" y1="288.4" x2="441.7" y2="-5.0"/><line x1="-5.0" y1="253.0" x2="396.9" y2="-5.0"/><line x1="-5.0" y1="219.2" x2="352.1" y2="-5.0"/><line x1="-5.0" y1="186.8" x2="307.2" y2="-5.0"/><line x1="-5.0" y1="155.7" x2="262.3" y2="-5.0"/><line x1="-5.0" y1="125.9" x2="217.4" y2="-5.0"/><line x1="-5.0" y1="97.3" x2="172.4" y2="-5.0"/><line x1="-5.0" y1="69.8" x2="127.3" y2="-5.0"/><line x1="-5.0" y1="43.3" x2="82.2" y2="-5.0"/><line x1="-5.0" y1="17.9" x2="37.1" y2="-5.0"/><line x1="36.2" y1="687.0" x2="-5.0" y2="658.8"/><line x1="116.7" y1="687.0" x2="-5.0" y2="605.9"/><line x1="197.1" y1="687.0" x2="-5.0" y2="555.8"/><line x1="277.4" y1="687.0" x2="-5.0" y2="508.3"/><line x1="357.6" y1="687.0" x2="-5.0" y2="463.0"/><line x1="437.7" y1="687.0" x2="-5.0" y2="420.0"/><line x1="517.7" y1="687.0" x2="-5.0" y2="379.0"/><line x1="597.6" y1="687.0" x2="-5.0" y2="339.9"/><line x1="757.1" y1="687.0" x2="-5.0" y2="266.9"/><line x1="836.6" y1="687.0" x2="-5.0" y2="232.7"/><line x1="916.1" y1="687.0" x2="-5.0" y2="200.0"/><line x1="995.5" y1="687.0" x2="-5.0" y2="168.6"/><line x1="1074.8" y1="687.0" x2="-5.0" y2="138.5"/><line x1="1153.9" y1="687.0" x2="-5.0" y2="109.6"/><line x1="1190.0" y1="666.0" x2="-5.0" y2="81.8"/><line x1="1190.0" y1="628.5" x2="-5.0" y2="55.1"/><line x1="1190.0" y1="592.4" x2="-5.0" y2="29.4"/><line x1="1190.0" y1="557.6" x2="-5.0" y2="4.6"/><line x1="1190.0" y1="524.1" x2="26.4" y2="-5.0"/><line x1="1190.0" y1="491.8" x2="78.5" y2="-5.0"/><line x1="1190.0" y1="460.6" x2="130.5" y2="-5.0"/><line x1="1190.0" y1="430.4" x2="182.4" y2="-5.0"/><line x1="1190.0" y1="401.3" x2="234.3" y2="-5.0"/><line x1="1190.0" y1="373.2" x2="286.1" y2="-5.0"/><line x1="1190.0" y1="345.9" x2="337.9" y2="-5.0"/><line x1="1190.0" y1="319.6" x2="389.6" y2="-5.0"/><line x1="1190.0" y1="294.0" x2="441.2" y2="-5.0"/><line x1="1190.0" y1="269.3" x2="492.7" y2="-5.0"/><line x1="1190.0" y1="245.3" x2="544.2" y2="-5.0"/><line x1="1190.0" y1="222.0" x2="595.7" y2="-5.0"/><line x1="1190.0" y1="199.5" x2="647.0" y2="-5.0"/><line x1="1190.0" y1="177.6" x2="698.3" y2="-5.0"/><line x1="1190.0" y1="156.3" x2="749.6" y2="-5.0"/><line x1="1190.0" y1="135.6" x2="800.7" y2="-5.0"/><line x1="1190.0" y1="115.5" x2="851.8" y2="-5.0"/><line x1="1190.0" y1="96.0" x2="902.9" y2="-5.0"/><line x1="1190.0" y1="77.0" x2="953.8" y2="-5.0"/><line x1="1190.0" y1="58.5" x2="1004.8" y2="-5.0"/><line x1="1190.0" y1="40.5" x2="1055.6" y2="-5.0"/><line x1="1190.0" y1="22.9" x2="1106.4" y2="-5.0"/><line x1="1190.0" y1="5.9" x2="1157.1" y2="-5.0"/></g>
<line x1="6.1" y1="687.0" x2="842.3" y2="-5.0" stroke="#6f9fb6" stroke-width="1"/>
<line x1="677.4" y1="687.0" x2="-5.0" y2="302.6" stroke="#8a6cc0" stroke-width="1"/>
</g>
<polygon points="377.0,280.0 518.5,349.2 308.1,532.5 160.3,448.5" fill="none" stroke="#ff0010" stroke-width="1.6" stroke-linejoin="round"/>
<clipPath id="npk"><path clip-rule="evenodd" d="M0,0 H1185 V682 H0 Z M377.0,280.0 L518.5,349.2 L308.1,532.5 L160.3,448.5 Z"/></clipPath>
<g clip-path="url(#npk)"><line x1="567.2" y1="214.4" x2="202.8" y2="515.3" stroke="#34344a" stroke-width="1.3" stroke-dasharray="15 7" fill="none"/></g>
<g clip-path="url(#pk)"><line x1="567.2" y1="214.4" x2="202.8" y2="515.3" stroke="#4a50a4" stroke-width="1.3" stroke-dasharray="15 7" fill="none"/></g>
<line x1="345.0" y1="397.0" x2="376.0" y2="290.5" stroke="#4a50a4" stroke-width="1.2" stroke-dasharray="13 6" fill="none"/>
<line x1="345.0" y1="397.0" x2="509.6" y2="354.3" stroke="#4a50a4" stroke-width="1.2" stroke-dasharray="13 6" fill="none"/>
<line x1="345.0" y1="397.0" x2="308.1" y2="532.0" stroke="#4a50a4" stroke-width="1.2" stroke-dasharray="13 6" fill="none"/>
<line x1="345.0" y1="397.0" x2="161.0" y2="449.0" stroke="#4a50a4" stroke-width="1.2" stroke-dasharray="13 6" fill="none"/>
<g clip-path="url(#npk)"><line x1="252.0" y1="348.0" x2="445.0" y2="450.5" stroke="#2c2a46" stroke-width="1.3" stroke-dasharray="13 6" fill="none"/></g>
<g clip-path="url(#pk)"><line x1="252.0" y1="348.0" x2="445.0" y2="450.5" stroke="#4a50a4" stroke-width="1.2" stroke-dasharray="13 6" fill="none"/></g>
<ellipse cx="345" cy="397" rx="5" ry="4.6" fill="#0a2f80"/>
<ellipse cx="278.5" cy="462" rx="9.5" ry="6.2" fill="none" stroke="#6a6fbe" stroke-width="2.4" opacity="0.8"/>
<text x="621" y="451" font-family="Liberation Sans, sans-serif" font-size="17" fill="#1c2150">3.00</text>
<path d="M627.9,453.7 L628.7,464.7 A11.8,5.8 0 0 0 652.3,464.7 L653.1,453.7 Z" fill="#b0534f" stroke="#e6aaa8" stroke-width="1.3"/><ellipse cx="640.5" cy="453.7" rx="14.9" ry="9.9" fill="none" stroke="#d4a6b4" stroke-width="4.6"/><ellipse cx="640.5" cy="453.7" rx="13.6" ry="8.6" fill="#2a44b4" stroke="#ff0010" stroke-width="1.5"/><path d="M627.9,454.0 A13.6,8.6 0 0 0 653.1,454.0 A21.8,11.2 0 0 1 627.9,454.0 Z" fill="#6c83e0"/>
<line x1="640" y1="453" x2="640.5" y2="461.5" stroke="#26306e" stroke-width="0.9"/>
<path d="M541.7,472.9 Q560,518 612,549 " fill="none" stroke="#b9a0ad" stroke-width="1.1" opacity="0.32"/>
<path d="M633,562 Q665,575 700,573.5 Q716,572 727,566" fill="none" stroke="#cfcfcf" stroke-width="2.2" stroke-linecap="round"/>
<ellipse cx="622.5" cy="555.5" rx="10.2" ry="11.2" transform="rotate(-20 622.5 555.5)" fill="#f1f1f1" fill-opacity="0.92" stroke="#b4b4b4" stroke-width="1.6"/>
<ellipse cx="622.5" cy="555.5" rx="2.6" ry="2.9" fill="#9a9a9a"/>
<path d="M636.3,468.5 L641,468.5 L640.5,484 L646.5,480.5 Q650.5,479.5 650,483.5 L636.5,494.5 Q634.5,495.5 632.5,493.5 L621.5,485.5 Q620.5,481.5 625,481.8 L632.2,485.2 Z" fill="none" stroke="#b9a5ae" stroke-width="3.4" stroke-linejoin="round" opacity="0.8"/>
<path d="M636.3,468.5 L641,468.5 L640.5,484 L646.5,480.5 Q650.5,479.5 650,483.5 L636.5,494.5 Q634.5,495.5 632.5,493.5 L621.5,485.5 Q620.5,481.5 625,481.8 L632.2,485.2 Z" fill="#ffffff" stroke="#8a8a8a" stroke-width="0.8" stroke-linejoin="round"/>
<rect x="623.6" y="495.4" width="19.2" height="5.2" fill="#ffffff" stroke="#9a8a92" stroke-width="0.8"/>
<defs><radialGradient id="shd" cx="50%" cy="50%" r="50%"><stop offset="0" stop-color="#000" stop-opacity="0.28"/><stop offset="0.6" stop-color="#000" stop-opacity="0.10"/><stop offset="1" stop-color="#000" stop-opacity="0"/></radialGradient><linearGradient id="vf" x1="0" y1="0" x2="1" y2="1"><stop offset="0" stop-color="#f0f0f1"/><stop offset="1" stop-color="#dcdcde"/></linearGradient><linearGradient id="vr" x1="0" y1="0" x2="1" y2="0"><stop offset="0" stop-color="#dededf"/><stop offset="1" stop-color="#ededee"/></linearGradient></defs>
<ellipse cx="1140" cy="52" rx="50" ry="24" transform="rotate(-12 1140 52)" fill="url(#shd)"/>
<polygon points="1094.7,2.6 1133.6,24.4 1133.6,62 1098.7,41.6" fill="url(#vf)" opacity="0.88"/>
<polygon points="1133.6,24.4 1164,2.6 1161.4,35.6 1133.6,62" fill="url(#vr)" opacity="0.88"/>
<polygon points="1094.7,2.6 1133.6,24.4 1164,2.6 1160,-10 1094,-10" fill="#ececed" opacity="0.88"/>
<polygon points="1127,19.5 1127.2,27 1133.6,31 1140,26.5 1139.6,19.5 1133.5,16.5" fill="#dfe2e9"/>
<path d="M1094.7,2.6 L1133.6,24.4 L1164,2.6 M1133.6,24.4 L1133.6,62" fill="none" stroke="#a9abb0" stroke-width="0.9" stroke-dasharray="9 5"/>
<path d="M1164,2.6 L1161.4,35.6" fill="none" stroke="#a9abb0" stroke-width="0.9" stroke-dasharray="9 4"/>
<line x1="1032" y1="0" x2="1183" y2="49.3" stroke="#a8a8a8" stroke-width="0.9" opacity="0.9"/>
<line x1="1094" y1="0" x2="1098.7" y2="41.6" stroke="#4a4af0" stroke-width="1.5"/>
<line x1="1098.7" y1="41.6" x2="1139.5" y2="67.5" stroke="#f29a9a" stroke-width="1.7"/>
<text x="1142" y="76.5" font-family="Liberation Sans, sans-serif" font-size="12" font-weight="bold" fill="#ff8c8c">X</text>
<text transform="matrix(0.78,0.44,0,1,1102,32)" font-family="Liberation Sans, sans-serif" font-size="9.6" font-weight="bold" fill="#959ba6" letter-spacing="0.2">FRONT</text>
<text transform="matrix(0.72,-0.62,0,1,1141,41)" font-family="Liberation Sans, sans-serif" font-size="8" font-weight="bold" fill="#a2a7b0" letter-spacing="0.1">RIGHT</text>
<text transform="matrix(0.95,0.30,-0.8,0.55,1124,1.5)" font-family="Liberation Sans, sans-serif" font-size="8.6" font-weight="bold" fill="#a2a7b0">TOP</text>
</svg>

<div id="panel">
 <div class="hdr"><span class="minus"></span><span class="ttl">EDIT FEATURE</span><svg class="ff" width="14" height="9" viewBox="0 0 14 9"><polygon points="0,0.4 6.4,4.5 0,8.6" fill="#333"/><polygon points="6.2,0.4 12.6,4.5 6.2,8.6" fill="#333"/><polygon points="12.4,0.4 14,1.4 14,7.6 12.4,8.6" fill="#333"/></svg></div>
 <div class="row" style="top:32px"><span class="lbl">Type</span>
   <div class="bbtn" style="left:107px;top:0"><svg width="29" height="34" viewBox="0 0 29 34"><polygon points="5.5,10.5 9.5,6.8 19.8,6.8 19.8,22 15.8,25.7 5.5,25.7" fill="#9bd0f8"/><polygon points="15.8,10.5 19.8,6.8 19.8,22 15.8,25.7" fill="#6fb0ea"/><polygon points="5.5,10.5 9.5,6.8 19.8,6.8 15.8,10.5" fill="#b8e0fb"/><polygon points="5.5,25.7 15.8,25.7 19.8,22 19.8,23.8 15.8,27.5 5.5,27.5" fill="#d8d4cc"/><line x1="22.6" y1="9.5" x2="22.6" y2="23" stroke="#fff" stroke-width="1.1"/><polygon points="22.6,7 24.5,10.6 20.7,10.6" fill="#fff"/></svg></div>
   <div class="ibtn" style="left:143px;top:0"><svg width="29" height="34" viewBox="0 0 29 34"><polygon points="4,10.5 8,6.5 17.5,6.5 17.5,22.5 13.5,26.5 12,24 6,24 4,26.5" fill="#62a8e6"/><polygon points="13.5,10.5 17.5,6.5 17.5,22.5 13.5,26.5" fill="#3f87cf"/><polygon points="4,10.5 8,6.5 17.5,6.5 13.5,10.5" fill="#8cc4f2"/><polygon points="4,26.5 6,24 6,26 4.5,28.5" fill="#bdbdbd"/><polygon points="12,24 13.5,26.5 17.5,22.5 17.5,24.5 13.5,28.5 12,26" fill="#bdbdbd"/><line x1="20.5" y1="9" x2="20.5" y2="23" stroke="#222" stroke-width="1.1"/><polygon points="20.5,6 22.6,10 18.4,10" fill="#222"/></svg></div>
 </div>
 <div class="row" style="top:69px"><span class="lbl">Profiles</span>
   <div class="selbtn on" style="left:107px;width:102px"><svg class="cur" width="14" height="20" viewBox="0 0 14 20"><path d="M2.2,2 L2.2,15 L5.4,12.2 L7.8,17.6 L10,16.6 L7.6,11.4 L11.8,11.2 Z" fill="#ececec" stroke="#555" stroke-width="1.1" stroke-linejoin="round"/></svg><span>15 selected</span></div>
   <span class="xx" style="left:223px"><svg width="12" height="12" viewBox="0 0 12 12"><path d="M1.5,1.5 L10.5,10.5 M10.5,1.5 L1.5,10.5" stroke="#4a4a4a" stroke-width="2.2"/></svg></span>
 </div>
 <div class="row" style="top:107px"><span class="lbl">Start</span>
   <div class="dd" style="left:107px"><svg class="ic" style="left:4.5px" width="22" height="24" viewBox="0 0 22 24"><line x1="5" y1="3" x2="5" y2="21" stroke="#14215c" stroke-width="2.4"/><line x1="6" y1="12" x2="14" y2="12" stroke="#111" stroke-width="1.2"/><polygon points="15.5,12 11.5,9.4 11.5,14.6" fill="#111"/></svg><span>Profile Plane</span><i></i></div>
 </div>
 <div class="row" style="top:144.5px"><span class="lbl">Direction</span>
   <div class="dd" style="left:107px"><svg class="ic" width="22" height="24" viewBox="0 0 22 24"><polygon points="9,2.5 19.5,6.5 18.8,15.5 8.2,11" fill="#f4b183" stroke="#d9935f" stroke-width="0.6"/><line x1="3.5" y1="19" x2="13.5" y2="9" stroke="#5c5c5c" stroke-width="1.6"/><polygon points="1.2,21.3 2.8,15.6 6.9,19.7" fill="#5c5c5c"/></svg><span>One Side</span><i></i></div>
 </div>
 <div class="row" style="top:182px"><span class="lbl">Extent Type</span>
   <div class="dd" style="left:107px"><svg class="ic" style="left:3.5px" width="22" height="24" viewBox="0 0 22 24"><line x1="1" y1="12" x2="7" y2="12" stroke="#111" stroke-width="1.1"/><polygon points="8.6,12 5.2,9.8 5.2,14.2" fill="#111"/><rect x="8.8" y="6.5" width="2.6" height="9" fill="#e81c1c"/><rect x="8.8" y="3" width="2.6" height="2.6" fill="#14215c"/><path d="M10,15.5 L10,21 L19,21 L19,3" fill="none" stroke="#14215c" stroke-width="2.2"/></svg><span>To Object</span><i></i></div>
 </div>
 <div class="row" style="top:220px"><span class="lbl">Object</span>
   <div class="selbtn" style="left:107px;width:94px"><svg class="cur" width="14" height="20" viewBox="0 0 14 20"><path d="M2.2,2 L2.2,15 L5.4,12.2 L7.8,17.6 L10,16.6 L7.6,11.4 L11.8,11.2 Z" fill="#fafafa" stroke="#555" stroke-width="1.1" stroke-linejoin="round"/></svg><span>1 selected</span></div>
   <span class="xx" style="left:216px"><svg width="12" height="12" viewBox="0 0 12 12"><path d="M1.5,1.5 L10.5,10.5 M10.5,1.5 L1.5,10.5" stroke="#4a4a4a" stroke-width="2.2"/></svg></span>
 </div>
 <div class="row" style="top:257px"><span class="lbl">Extend</span>
   <div class="bbtn" style="left:107px;top:0"><svg width="29" height="34" viewBox="0 0 29 34"><defs><linearGradient id="g1" x1="0" y1="0" x2="0" y2="1"><stop offset="0" stop-color="#fff"/><stop offset="1" stop-color="#cfd3d8"/></linearGradient></defs><rect x="4" y="11.5" width="11" height="10.5" rx="1" fill="url(#g1)" stroke="#b8bcc2" stroke-width="0.6"/><path d="M23,7 L23,12 L17,20" fill="none" stroke="#14215c" stroke-width="2.2"/><path d="M17,19.5 L17,27" fill="none" stroke="#e81c1c" stroke-width="2.2"/></svg></div>
   <div class="ibtn" style="left:143px;top:0"><svg width="29" height="34" viewBox="0 0 29 34"><polygon points="4,11.5 18.5,11.5 13.5,18.5 13.5,22 4,22" fill="url(#g1)" stroke="#b8bcc2" stroke-width="0.6"/><path d="M23,7 L23,12 L16.5,20 L16.5,27" fill="none" stroke="#e81c1c" stroke-width="2.2"/></svg></div>
 </div>
 <div class="row" style="top:295px"><span class="lbl">Offset</span><div class="inp" style="left:108px"><span>0.00 mm</span></div></div>
 <div class="row" style="top:332.5px"><span class="lbl">Taper Angle</span><div class="inp" style="left:108px"><span>0.0 deg</span></div></div>
 <div class="sep" style="top:374px;left:3px;width:291px"></div>
 <div class="row" style="top:382.5px"><span class="lbl">Operation</span>
   <div class="dd" style="left:107px"><svg class="ic" width="22" height="24" viewBox="0 0 22 24"><rect x="6.5" y="3" width="9.5" height="11" fill="#f2a9ae"/><path d="M3.8,9 L3.8,20 L18.6,20 L18.6,9 L16,9 L16,15.5 L6.5,15.5 L6.5,9 Z" fill="#3d8fd6"/></svg><span>Cut</span><i></i></div>
 </div>
 <div class="row" style="top:420px"><svg style="position:absolute;left:11px;top:11px" width="10" height="12" viewBox="0 0 10 12"><polygon points="1,0.5 9,6 1,11.5" fill="#333"/></svg><span class="lbl" style="left:31px;font-weight:bold;color:#2b2b2b">Objects To Cut</span></div>
 <div class="sep2" style="top:456px"></div>
 <div class="info"><svg width="16" height="16" viewBox="0 0 16 16"><circle cx="8" cy="8" r="7.4" fill="#111"/><rect x="6.8" y="6.6" width="2.6" height="5.6" fill="#fff"/><rect x="6" y="6.6" width="2" height="1.2" fill="#fff"/><rect x="5.8" y="11.2" width="4.6" height="1.2" fill="#fff"/><circle cx="8" cy="4.3" r="1.45" fill="#fff"/></svg></div>
 <div class="btn" style="left:135px">OK</div>
 <div class="btn" style="left:222.5px">Cancel</div>
</div>
<div id="tip"><span id="tiptxt">Hold Ctrl to modify selection</span></div>
<svg width="1185" height="682" viewBox="0 0 1185 682" style="position:absolute;left:0;top:0;pointer-events:none">
 <rect x="1183" y="0" width="2" height="678.5" fill="#000"/>
 <path d="M978.5,273.5 C973,283 966,300 961,330 C956,365 953,395 962,408 C972,418 988,419.5 1000,421 C1040,425 1110,422.5 1148,417.2 C1164,415 1176,402 1180.5,378 C1184.8,352 1184.8,322 1181.2,305 C1179.8,297.6 1176,294.8 1167,295.3 C1120,299 1065,299 1030,296.2 C1008,294.5 990,293 973.5,291.8" fill="none" stroke="#e41a1c" stroke-width="4.6" stroke-linecap="round" stroke-linejoin="round"/>
</svg>
</body></html>
